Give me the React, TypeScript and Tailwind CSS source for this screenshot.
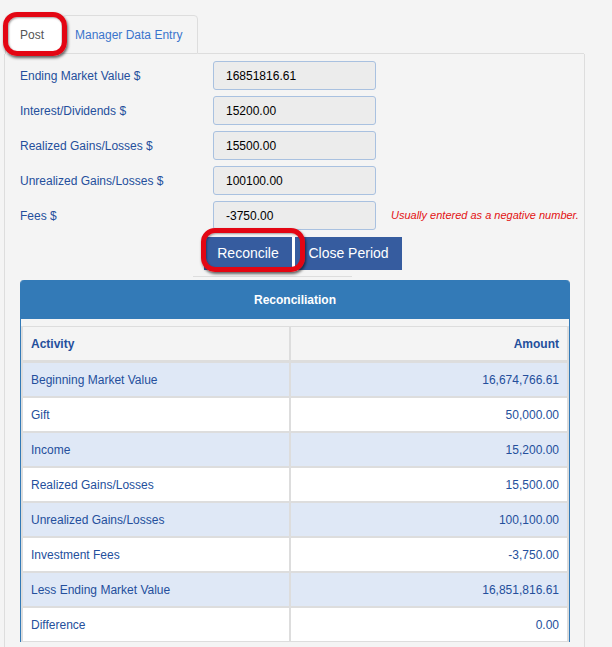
import React from 'react';

const fields = [
  { label: 'Ending Market Value $', value: '16851816.61' },
  { label: 'Interest/Dividends $', value: '15200.00' },
  { label: 'Realized Gains/Losses $', value: '15500.00' },
  { label: 'Unrealized Gains/Losses $', value: '100100.00' },
  { label: 'Fees $', value: '-3750.00', hint: 'Usually entered as a negative number.' },
];

const rows = [
  { activity: 'Beginning Market Value', amount: '16,674,766.61' },
  { activity: 'Gift', amount: '50,000.00' },
  { activity: 'Income', amount: '15,200.00' },
  { activity: 'Realized Gains/Losses', amount: '15,500.00' },
  { activity: 'Unrealized Gains/Losses', amount: '100,100.00' },
  { activity: 'Investment Fees', amount: '-3,750.00' },
  { activity: 'Less Ending Market Value', amount: '16,851,816.61' },
  { activity: 'Difference', amount: '0.00' },
];

export default function App() {
  return (
    <div
      className="relative w-[612px] h-[647px] overflow-hidden bg-[#f4f4f4] text-[12px]"
      style={{ fontFamily: '"Liberation Sans", Arial, sans-serif' }}
    >
      {/* tabs */}
      <div className="flex items-end pt-[15px] pl-[5px] h-[54px]">
        <div className="w-[57px] h-[39px] bg-white border border-b-0 border-[#dddddd] rounded-t-[4px] flex items-center pl-[14px] text-[#555555]">
          Post
        </div>
        <div className="w-[136px] h-[39px] border border-[#dddddd] rounded-t-[4px] flex items-center pl-[12px] text-[#3a74cc]">
          Manager Data Entry
        </div>
        <div className="w-[386px] h-px bg-[#dddddd]" />
      </div>

      {/* panel */}
      <div className="ml-[4px] w-[581px] h-[600px] border-l border-r border-[#dddddd]">
        <div className="flex flex-col gap-[6px] pt-[7px]">
          {fields.map((f) => (
            <div key={f.label} className="flex items-center h-[29px]">
              <div className="w-[208px] pl-[15px] text-[#244f9c]">{f.label}</div>
              <div className="w-[163px] h-[29px] bg-[#ececec] border border-[#a9c1e0] rounded-[3px] flex items-center pl-[12px] text-black">
                {f.value}
              </div>
              {f.hint && (
                <div className="ml-[15px] text-[11px] italic text-[#e31212]">{f.hint}</div>
              )}
            </div>
          ))}
        </div>

        <div className="flex mt-[7px] ml-[199px]">
          <button className="w-[88px] h-[33px] bg-[#365c9f] text-white text-[14px]">Reconcile</button>
          <button className="w-[110px] h-[33px] bg-[#365c9f] border-l-[3px] border-white text-white text-[14px]">Close Period</button>
        </div>
        <div className="ml-[188px] mt-[6px] w-[159px] h-px bg-[#dddddd]" />

        {/* reconciliation panel */}
        <div className="ml-[15px] mt-[3px] w-[550px] border-l border-r border-[#337ab7] rounded-t-[4px]">
          <div className="h-[39px] bg-[#337ab7] rounded-t-[3px] flex items-center justify-center text-white font-bold">
            Reconciliation
          </div>
          <div className="pt-[7px]">
            <div className="bg-[#dddddd] px-[2px] py-[1px]">
              <div className="grid grid-cols-[266px_1fr] gap-x-[2px] h-[33px] mb-[3px]">
                <div className="bg-[#f4f4f4] flex items-center pl-[8px] font-bold text-[#244f9c]">Activity</div>
                <div className="bg-[#f4f4f4] flex items-center justify-end pr-[8px] font-bold text-[#244f9c]">Amount</div>
              </div>
              <div className="flex flex-col gap-[2px]">
                {rows.map((r, i) => (
                  <div key={r.activity} className="grid grid-cols-[266px_1fr] gap-x-[2px] h-[33px]">
                    <div className={`${i % 2 === 0 ? 'bg-[#dfe8f6]' : 'bg-white'} flex items-center pl-[8px] text-[#244f9c]`}>
                      {r.activity}
                    </div>
                    <div className={`${i % 2 === 0 ? 'bg-[#dfe8f6]' : 'bg-white'} flex items-center justify-end pr-[8px] text-[#244f9c]`}>
                      {r.amount}
                    </div>
                  </div>
                ))}
              </div>
            </div>
          </div>
        </div>
      </div>

      {/* annotation outlines */}
      <div className="absolute left-[3px] top-[12px] w-[64px] h-[44px] border-[5px] border-[#e30613] rounded-[14px] shadow-[1px_2px_3px_rgba(0,0,0,0.6),inset_1px_1px_2px_rgba(0,0,0,0.35)]" />
      <div className="absolute left-[201px] top-[228px] w-[104px] h-[44px] border-[5px] border-[#e30613] rounded-[14px] shadow-[1px_2px_3px_rgba(0,0,0,0.6),inset_1px_1px_2px_rgba(0,0,0,0.35)]" />
    </div>
  );
}
